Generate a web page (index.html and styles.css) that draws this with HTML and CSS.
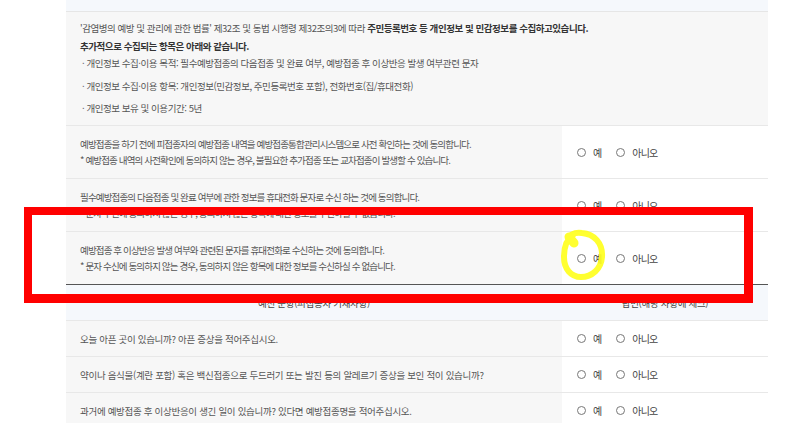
FILE: index.html
```html
<!DOCTYPE html>
<html lang="ko">
<head>
<meta charset="UTF-8">
<meta name="viewport" content="width=device-width, initial-scale=1.0">
<title>예방접종 예진 동의</title>
<link rel="stylesheet" href="styles.css">
</head>
<body>
<div class="page">
  <div class="strip"></div>

  <div class="notice">
    <p>'감염병의 예방 및 관리에 관한 법률' 제32조 및 동법 시행령 제32조의3에 따라 <b>주민등록번호 등 개인정보 및 민감정보를 수집하고있습니다.</b><br>
    <b>추가적으로 수집되는 항목은 아래와 같습니다.</b></p>
    <ul>
      <li>· 개인정보 수집·이용 목적: 필수예방접종의 다음접종 및 완료 여부, 예방접종 후 이상반응 발생 여부관련 문자</li>
      <li>· 개인정보 수집·이용 항목: 개인정보(민감정보, 주민등록번호 포함), 전화번호(집/휴대전화)</li>
      <li>· 개인정보 보유 및 이용기간: 5년</li>
    </ul>
  </div>

  <div class="row tall">
    <div class="q">
      <span>예방접종을 하기 전에 피접종자의 예방접종 내역을 예방접종통합관리시스템으로 사전 확인하는 것에 동의합니다.</span>
      <span>* 예방접종 내역의 사전확인에 동의하지 않는 경우, 불필요한 추가접종 또는 교차접종이 발생할 수 있습니다.</span>
    </div>
    <div class="a"><span class="radio"></span><span class="opt">예</span><span class="radio"></span><span class="opt">아니오</span></div>
  </div>

  <div class="row tall">
    <div class="q">
      <span>필수예방접종의 다음접종 및 완료 여부에 관한 정보를 휴대전화 문자로 수신 하는 것에 동의합니다.</span>
      <span>* 문자 수신에 동의하지 않는 경우, 동의하지 않은 항목에 대한 정보를 수신하실 수 없습니다.</span>
    </div>
    <div class="a"><span class="radio"></span><span class="opt">예</span><span class="radio"></span><span class="opt">아니오</span></div>
  </div>

  <div class="row tall last">
    <div class="q">
      <span>예방접종 후 이상반응 발생 여부와 관련된 문자를 휴대전화로 수신하는 것에 동의합니다.</span>
      <span>* 문자 수신에 동의하지 않는 경우, 동의하지 않은 항목에 대한 정보를 수신하실 수 없습니다.</span>
    </div>
    <div class="a"><span class="radio"></span><span class="opt">예</span><span class="radio"></span><span class="opt">아니오</span></div>
  </div>

  <div class="row head">
    <div class="q">예진 문항(피접종자 기재사항)</div>
    <div class="a">답변(해당 사항에 체크)</div>
  </div>

  <div class="row">
    <div class="q">오늘 아픈 곳이 있습니까? 아픈 증상을 적어주십시오.</div>
    <div class="a"><span class="radio"></span><span class="opt">예</span><span class="radio"></span><span class="opt">아니오</span></div>
  </div>

  <div class="row">
    <div class="q">약이나 음식물(계란 포함) 혹은 백신접종으로 두드러기 또는 발진 등의 알레르기 증상을 보인 적이 있습니까?</div>
    <div class="a"><span class="radio"></span><span class="opt">예</span><span class="radio"></span><span class="opt">아니오</span></div>
  </div>

  <div class="row">
    <div class="q">과거에 예방접종 후 이상반응이 생긴 일이 있습니까? 있다면 예방접종명을 적어주십시오.</div>
    <div class="a"><span class="radio"></span><span class="opt">예</span><span class="radio"></span><span class="opt">아니오</span></div>
  </div>

  <!-- 강조 표시 -->
  <div class="mark-box"></div>
  <svg class="mark-circle" width="48" height="54" viewBox="0 0 48 54">
    <path d="M10 12 C8 6, 14 3, 22 4 C34 5, 43 14, 42 28 C41 40, 32 48, 21 48 C11 48, 4 40, 4 28 C4 18, 7 10, 13 6" fill="none" stroke="#ffff1a" stroke-width="6" stroke-linecap="round"/>
    <path d="M9 8 L14 14" fill="none" stroke="#ffff1a" stroke-width="9" stroke-linecap="round"/>
  </svg>
</div>
</body>
</html>
```

FILE: styles.css
```css
  body {
    margin: 0;
    padding: 0;
    background: #fff;
    font-family: "Noto Sans CJK KR", "Noto Sans", sans-serif;
    font-size: 9.5px;
    letter-spacing: -0.3px;
    color: #555;
  }
  .page {
    position: relative;
    width: 702px;
    padding-left: 66px;
  }
  .strip {
    height: 11px;
    background: #f5f8fc;
    border-bottom: 1px solid #e6e6e6;
  }
  .notice {
    height: 104px;
    padding: 7px 14px 2px;
    background: #f7f7f7;
    border-bottom: 1px solid #e8e8e8;
    letter-spacing: -0.45px;
  }
  .notice p {
    margin: 0;
    line-height: 18px;
  }
  .notice b {
    color: #333;
  }
  .notice ul {
    list-style: none;
    margin: 0;
    padding: 0 0 0 2px;
  }
  .notice li {
    line-height: 16px;
    margin-bottom: 6.5px;
  }
  .row {
    display: grid;
    grid-template-columns: 496px 206px;
    height: 35px;
    border-bottom: 1px solid #e8e8e8;
  }
  .row.tall {
    height: 52px;
    letter-spacing: -0.85px;
  }
  .row.last {
    border-bottom-color: #555;
  }
  .q {
    background: #f7f7f7;
    padding: 0 14px;
    display: flex;
    flex-direction: column;
    justify-content: center;
    line-height: 16px;
  }
  .a {
    background: #fff;
    display: flex;
    align-items: center;
    padding-left: 15px;
  }
  .row.head .q,
  .row.head .a {
    background: #f5f8fc;
    align-items: center;
    justify-content: center;
    padding: 0;
    color: #444;
  }
  .radio {
    width: 7px;
    height: 7px;
    border: 1px solid #777;
    border-radius: 50%;
    margin-right: 7px;
  }
  .opt {
    color: #444;
    margin-right: 15px;
    font-size: 10px;
    letter-spacing: -0.85px;
  }
  .mark-box {
    position: absolute;
    left: 24px;
    top: 207px;
    width: 729px;
    height: 96px;
    box-sizing: border-box;
    border-style: solid;
    border-color: #ff0000;
    border-width: 8px 9px 9px 8px;
  }
  .mark-circle {
    position: absolute;
    left: 560px;
    top: 229px;
    opacity: 0.9;
  }
```
